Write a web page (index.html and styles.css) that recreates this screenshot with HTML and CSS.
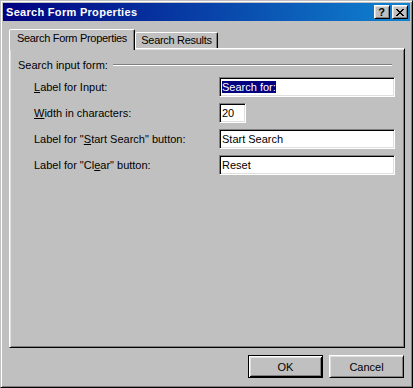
FILE: index.html
```html
<!DOCTYPE html>
<html>
<head>
<meta charset="utf-8">
<link rel="stylesheet" href="styles.css">
</head>
<body>
<div class="window">
  <div class="titlebar">
    <span class="title">Search Form Properties</span>
    <div class="tbtns">
      <span class="tbtn help">?</span>
      <span class="tbtn"><svg width="8" height="7" viewBox="0 0 8 7"><path fill="#000" d="M0 0h2v1h-2zM6 0h2v1h-2zM1 1h2v1h-2zM5 1h2v1h-2zM2 2h4v1h-4zM3 3h2v1h-2zM2 4h4v1h-4zM1 5h2v1h-2zM5 5h2v1h-2zM0 6h2v1h-2zM6 6h2v1h-2z"/></svg></span>
    </div>
  </div>
  <div class="content">
    <div class="tabs">
      <div class="tab active">Search Form Properties</div>
      <div class="tab">Search Results</div>
    </div>
    <div class="panel">
      <div class="group-head"><span>Search input form:</span><span class="etch"></span></div>
      <div class="rows">
        <label><u>L</u>abel for Input:</label>
        <div class="field wide"><span class="sel">Search for:</span></div>
        <label><u>W</u>idth in characters:</label>
        <div class="field narrow">20</div>
        <label>Label for "<u>S</u>tart Search" button:</label>
        <div class="field wide">Start Search</div>
        <label>Label for "Cl<u>e</u>ar" button:</label>
        <div class="field wide">Reset</div>
      </div>
    </div>
    <div class="buttons">
      <button class="btn default">OK</button>
      <button class="btn">Cancel</button>
    </div>
  </div>
</div>
</body>
</html>
```
FILE: styles.css
```css
html, body {
  margin: 0;
  padding: 0;
  background: #c0c0c0;
}
body {
  font-family: "Liberation Sans", Arial, sans-serif;
  font-size: 11px;
  color: #000;
}
.window {
  width: 413px;
  height: 388px;
  box-sizing: border-box;
  background: #c0c0c0;
  border: 1px solid;
  border-color: #c0c0c0 #000 #000 #c0c0c0;
  box-shadow: inset 1px 1px #fff, inset -1px -1px #808080;
  padding: 2px;
  display: flex;
  flex-direction: column;
}
.titlebar {
  height: 18px;
  flex: none;
  display: flex;
  align-items: center;
  padding: 0 2px 0 3px;
  background: linear-gradient(to right, #000080, #1084d0);
}
.title {
  flex: 1;
  color: #fff;
  font-weight: bold;
  font-size: 11px;
  line-height: 13px;
  letter-spacing: 0.3px;
}
.tbtns {
  display: flex;
  gap: 2px;
}
.tbtn {
  width: 16px;
  height: 14px;
  box-sizing: border-box;
  background: #c0c0c0;
  border: 1px solid;
  border-color: #fff #000 #000 #fff;
  box-shadow: inset 1px 1px #dfdfdf, inset -1px -1px #808080;
  display: flex;
  align-items: center;
  justify-content: center;
}
.tbtn svg {
  display: block;
  margin-left: -1px;
}
.help {
  font-weight: bold;
  font-size: 11px;
  line-height: 11px;
  padding-right: 1px;
}
.content {
  flex: 1;
  display: flex;
  flex-direction: column;
}
.tabs {
  display: flex;
  align-items: flex-end;
  margin: 8px 0 -2px 6px;
  position: relative;
  z-index: 1;
  height: 21px;
}
.tab {
  box-sizing: border-box;
  height: 16px;
  margin-bottom: 2px;
  width: 83px;
  background: #c0c0c0;
  border: 1px solid;
  border-bottom: none;
  border-color: #fff #000 transparent #fff;
  border-radius: 2px 2px 0 0;
  box-shadow: inset -1px 0 #808080;
  text-align: center;
  line-height: 14px;
  letter-spacing: -0.3px;
  white-space: nowrap;
}
.tab.active {
  width: 126px;
  height: 21px;
  margin-bottom: 0;
  line-height: 17px;
}
.panel {
  height: 300px;
  box-sizing: border-box;
  margin: 0 5px 0 6px;
  border: 1px solid;
  border-color: #fff #000 #000 #fff;
  box-shadow: inset 1px 1px #dfdfdf, inset -1px -1px #808080;
  padding: 10px 12px 0 8px;
}
.group-head {
  display: flex;
  align-items: center;
  gap: 5px;
  line-height: 13px;
}
.etch {
  flex: 1;
  height: 0;
  border-top: 1px solid #808080;
  border-bottom: 1px solid #fff;
  margin-top: -1px;
}
.rows {
  display: grid;
  grid-template-columns: 185px auto;
  row-gap: 6px;
  align-items: center;
  margin: 5px 0 0 16px;
}
.rows label {
  line-height: 13px;
  white-space: nowrap;
}
.field {
  height: 20px;
  box-sizing: border-box;
  background: #fff;
  border: 1px solid;
  border-color: #808080 #fff #fff #808080;
  box-shadow: inset 1px 1px #000, inset -1px -1px #dfdfdf;
  padding: 0 2px;
  line-height: 18px;
  white-space: nowrap;
}
.field.wide {
  width: 176px;
}
.field.narrow {
  width: 27px;
}
.sel {
  background: #000080;
  color: #fff;
}
.buttons {
  display: flex;
  justify-content: flex-end;
  gap: 6px;
  margin-top: 7px;
  padding-right: 6px;
}
.btn {
  width: 75px;
  height: 23px;
  box-sizing: border-box;
  padding: 0;
  background: #c0c0c0;
  border: 1px solid;
  border-color: #fff #000 #000 #fff;
  box-shadow: inset 1px 1px #dfdfdf, inset -1px -1px #808080;
  font-family: "Liberation Sans", Arial, sans-serif;
  font-size: 11px;
  color: #000;
}
.btn.default {
  border-color: #000;
  box-shadow: inset 1px 1px #fff, inset -1px -1px #000, inset 2px 2px #dfdfdf, inset -2px -2px #808080;
}
```
